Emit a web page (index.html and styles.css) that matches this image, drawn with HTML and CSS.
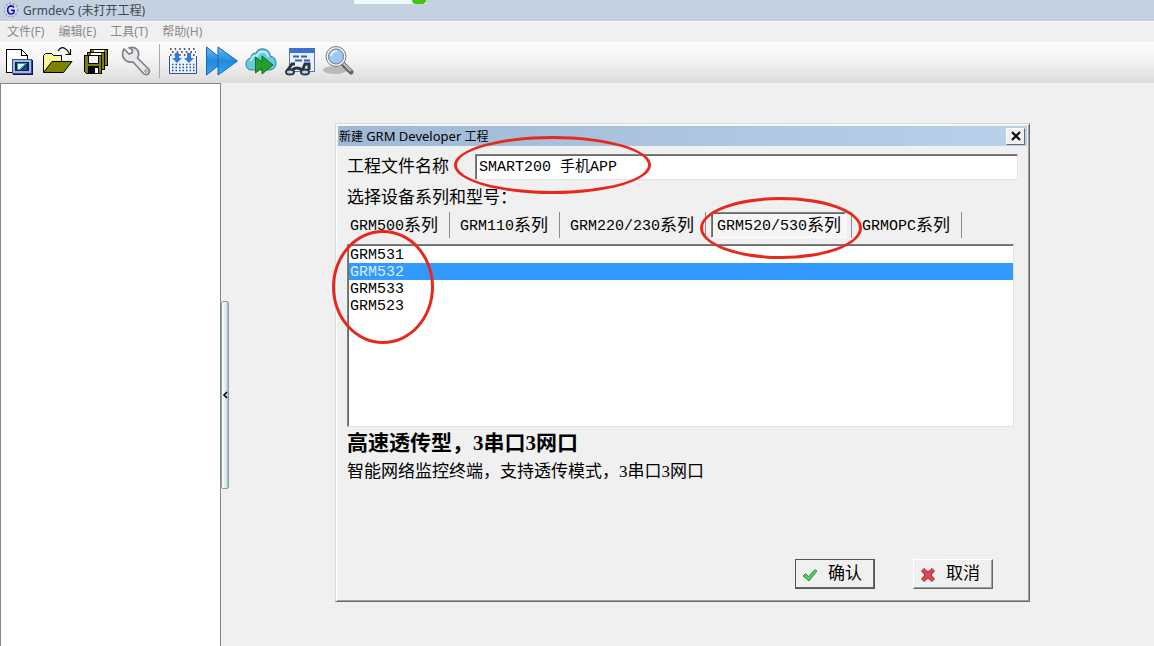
FILE: index.html
```
<!DOCTYPE html>
<html lang="zh-CN">
<head>
    <meta charset="UTF-8">
    <meta name="viewport" content="width=device-width, initial-scale=1.0">
    <title>Grmdev5</title>
    <link rel="stylesheet" href="styles.css">
</head>
<body>
    <header class="titlebar">
        <svg class="app-icon" width="16" height="16" viewBox="0 0 16 16">
            <circle cx="8" cy="8" r="6.500" fill="#dfe4ee" stroke="#9a9aa0" stroke-width="1.500" stroke-dasharray="2 1.5"/>
            <path d="M11 5.5Q10 3.8 8 3.8Q4.8 4.2 4.6 8Q4.8 11.8 8 12Q10.4 11.9 11 10.5V8.3H8" fill="none" stroke="#1010c8" stroke-width="1.7"/>
        </svg>
        <span>Grmdev5 (未打开工程)</span>
        <div class="top-tab"><i></i></div>
    </header>

    <nav class="menubar">
        <button>文件(F)</button>
        <button>编辑(E)</button>
        <button>工具(T)</button>
        <button>帮助(H)</button>
    </nav>

    <div class="toolbar">
        <button aria-label="新建">
            <svg width="32" height="32" viewBox="0 0 32 32" shape-rendering="crispEdges">
                <path d="M3.5 4.5H18.5L24.5 10.5V27.5H3.5Z" fill="#fff" stroke="#000"/>
                <path d="M18.5 4.5V10.5H24.5" fill="none" stroke="#000"/>
                <rect x="9.5" y="14.5" width="19" height="14" fill="#a9b7e0" stroke="#3a4a90"/>
                <path d="M10 29.5H29.5V15" fill="none" stroke="#101040"/>
                <rect x="12" y="17" width="14" height="9" fill="#10205c"/>
                <path d="M14 18H24V19L17 25H14Z" fill="#2ba4a4"/>
                <path d="M15 19H21L16 24H15Z" fill="#e8ffff"/>
                <path d="M24 20V25H18Z" fill="#1c3f9a"/>
            </svg>
        </button>
        <button aria-label="打开">
            <svg width="32" height="32" viewBox="0 0 32 32">
                <path d="M2.5 27V10.5L4.5 8.5H10.5L12.5 10.5H20.5V17" fill="#fbf59a" stroke="#000"/>
                <path d="M2.5 27.5L11 16.5H31L22.5 27.5Z" fill="#808000" stroke="#000"/>
                <path d="M17 6Q20 1 24 3.5Q27 5 28.5 9M29.5 4V9.5H24.5" fill="none" stroke="#000" stroke-width="1.2"/>
            </svg>
        </button>
        <button aria-label="全部保存">
            <svg width="34" height="32" viewBox="-1 0 34 32" shape-rendering="crispEdges">
                <path d="M10.5 4.5H27.5V20.5H10.5Z" fill="#808000" stroke="#000"/>
                <rect x="14" y="5" width="10" height="8" fill="#fff"/>
                <path d="M7.5 7.5H24.5V24.5H7.5Z" fill="#808000" stroke="#000"/>
                <rect x="11" y="8" width="10" height="8" fill="#fff"/>
                <path d="M4.5 10.5H21.5V28.5H6.5L4.5 26.5Z" fill="#808000" stroke="#000"/>
                <rect x="8.5" y="10.5" width="10" height="8" fill="#f4f4f4" stroke="#000"/>
                <rect x="8" y="21" width="11" height="7" fill="#000"/>
                <rect x="15" y="23" width="3" height="5" fill="#fff"/>
            </svg>
        </button>
        <button aria-label="设置">
            <svg width="34" height="32" viewBox="-1 0 34 32">
                <path d="M4 3L9 8L12 7L12.500 4L9 1.800Q15 0 18 5Q19.500 9 17.500 12L29 23.500Q30.500 27 27 28.500Q25 29 23.500 27.500L13 16Q7 17 4 12.500Q1 8 4 3Z" transform="translate(0 1)" fill="#e7e7ea" stroke="#808088" stroke-width="1.700" stroke-linejoin="round"/>
                <circle cx="26" cy="26" r="1.300" fill="#fff" stroke="#888890"/>
            </svg>
        </button>
        <span class="divider"></span>
        <button aria-label="编译">
            <svg width="32" height="32" viewBox="0 0 32 32">
                <path d="M3 4H29M5 7H29M3 10H29" stroke="#202a3c" stroke-width="1.600" stroke-dasharray="1.600 3"/>
                <path d="M2.500 11V28.500H29.500V11" fill="#eef4fd" stroke="#2e539b"/>
                <path d="M5 19.500H28M5 22.500H28M5 25.500H28" stroke="#294c94" stroke-width="1.500" stroke-dasharray="1.500 2"/>
                <path d="M8 8H12V13H15L10 18L5 13H8ZM20 8H24V13H27L22 18L17 13H20Z" fill="#3478df"/>
            </svg>
        </button>
        <button aria-label="下载">
            <svg width="33" height="32" viewBox="0 0 33 32">
                <defs>
                    <linearGradient id="blue" x2="0" y2="1">
                        <stop offset="0" stop-color="#69bdf5"/>
                        <stop offset=".5" stop-color="#2188de"/>
                        <stop offset="1" stop-color="#31aaf2"/>
                    </linearGradient>
                </defs>
                <path d="M1.500 2L13 11V2L32.500 16L13 30V21L1.500 30Z" fill="url(#blue)" stroke="#1769b4" stroke-linejoin="round"/>
                <path d="M13 11V21" stroke="#1769b4"/>
            </svg>
        </button>
        <button aria-label="远程下载">
            <svg width="33" height="32" viewBox="0 0 33 32">
                <path d="M8 25Q2 25 2 19Q2 14 7 13Q7 8 12 8Q14 3 20 4Q26 5 26 11Q32 12 32 18Q32 24 26 25Z" fill="#65cbe0" stroke="#277e9b"/>
                <path d="M7 16Q8 10 13 11Q15 6 20 7Q24 8 24 12" fill="none" stroke="#b7f1f7" stroke-width="2"/>
                <path d="M11.500 12L18 17V11L29 20L18 29V23L11.500 28Z" fill="#249f2b" stroke="#176b1c" stroke-linejoin="round"/>
            </svg>
        </button>
        <button aria-label="监视">
            <svg width="33" height="32" viewBox="1 0 33 32">
                <rect x="7.500" y="3.500" width="25" height="23" fill="#e8f1ff" stroke="#5379bc"/>
                <rect x="8" y="3" width="25" height="5" fill="#3c71d0"/>
                <path d="M11 11.500H17M19 11.500H25M13 15.500H20M22 15.500H28" stroke="#355fa9" stroke-width="2"/>
                <path d="M5 26L10 19H13M20 26L23 19H27V25" fill="none" stroke="#30343d" stroke-width="3"/>
                <path d="M10 25Q15 21 20 25" fill="none" stroke="#30343d" stroke-width="3"/>
                <ellipse cx="8" cy="27" rx="4" ry="2.500" fill="#b9d7f7" stroke="#333740" stroke-width="2"/>
                <ellipse cx="23" cy="27" rx="4" ry="2.500" fill="#b9d7f7" stroke="#333740" stroke-width="2"/>
            </svg>
        </button>
        <button aria-label="查找">
            <svg width="33" height="32" viewBox="0 0 33 32">
                <ellipse cx="13" cy="25" rx="12" ry="4" fill="#b9b9b9"/>
                <path d="M21 19L29 27" stroke="#606367" stroke-width="5" stroke-linecap="round"/>
                <path d="M21 18L29 26" stroke="#c2c3c5" stroke-width="2"/>
                <circle cx="14" cy="11.500" r="10" fill="#f2f2f2" stroke="#777b80"/>
                <circle cx="14" cy="11.500" r="7.500" fill="#a3c8ef" stroke="#607a9c"/>
                <path d="M9 11Q10 6 15 6" fill="none" stroke="#e3f2ff" stroke-width="2"/>
            </svg>
        </button>
    </div>

    <div class="workspace">
        <aside class="project-tree"></aside>
        <div class="splitter">
            <button aria-label="收起">
                <svg width="6" height="8" viewBox="0 0 6 8"><path d="M5 1L2 4L5 7" fill="none" stroke="#000" stroke-width="1.600"/></svg>
            </button>
        </div>

        <main class="content">
            <form class="dialog">
                <div class="dialog-title">
                    <span>新建 <span class="title-latin">GRM Developer</span> 工程</span>
                    <button type="button" class="close" aria-label="关闭">
                        <svg width="10" height="10" viewBox="0 0 10 10"><path d="M1 1L9 9M9 1L1 9" stroke="#000" stroke-width="2"/></svg>
                    </button>
                </div>

                <div class="dialog-body">
                    <div class="name-row">
                        <label for="name">工程文件名称</label>
                        <input type="text" id="name" value="SMART200 手机APP">
                    </div>
                    <label class="model-label" for="models">选择设备系列和型号：</label>

                    <div class="tabs">
                        <div class="tab"><button type="button"><span class="latin">GRM500</span>系列</button></div>
                        <div class="tab"><button type="button"><span class="latin">GRM110</span>系列</button></div>
                        <div class="tab"><button type="button"><span class="latin">GRM220/230</span>系列</button></div>
                        <div class="tab active"><button type="button"><span class="latin">GRM520/530</span>系列</button></div>
                        <div class="tab"><button type="button"><span class="latin">GRMOPC</span>系列</button></div>
                    </div>

                    <select id="models" class="models" size="10">
                        <option>GRM531</option>
                        <option selected>GRM532</option>
                        <option>GRM533</option>
                        <option>GRM523</option>
                    </select>

                    <h2>高速透传型，3串口3网口</h2>
                    <p>智能网络监控终端，支持透传模式，3串口3网口</p>

                    <div class="actions">
                        <button type="button" class="default">
                            <svg width="16" height="14" viewBox="0 0 16 14"><path d="M1 8L3.500 5.500L6.500 8.500L13 1.500L15 3L7 13Z" fill="#55c45c" stroke="#379e43" stroke-linejoin="round"/></svg>
                            确认
                        </button>
                        <button type="button">
                            <svg width="16" height="14" viewBox="0 0 16 14"><path d="M1.500 3L4 .5L8 4L12 .5L14.500 3L11 7L14.500 11L12 13.500L8 10L4 13.500L1.500 11L5 7Z" fill="#d94b50" stroke="#a22f35" stroke-linejoin="round"/></svg>
                            取消
                        </button>
                    </div>
                </div>

                <div class="mark mark-name"></div>
                <div class="mark mark-tab"></div>
                <div class="mark mark-models"></div>
            </form>
        </main>
    </div>
</body>
</html>
```

FILE: styles.css
```
* {
    box-sizing: border-box;
}

body {
    font-family: 'Noto Sans', 'Noto Sans CJK SC', sans-serif;
    font-size: 12px;
    margin: 0;
    min-height: 100vh;
    display: flex;
    flex-direction: column;
    background: #f0f0f0;
    color: #000;
}

button {
    font: inherit;
    color: inherit;
    background: none;
    border: none;
    padding: 0;
}

svg {
    display: block;
}

.titlebar {
    position: relative;
    display: flex;
    align-items: center;
    gap: 4px;
    height: 21px;
    padding: 0 0 1px 3px;
    background: #c3d1e0;
    color: #3c4652;
}

.top-tab {
    position: absolute;
    left: 354px;
    top: 0;
    width: 72px;
    height: 4px;
    display: flex;
    justify-content: flex-end;
    background: #f0faff;
}
.top-tab i {
    width: 14px;
    height: 4px;
    background: #45c414;
    border-radius: 0 0 6px 6px;
}

.menubar {
    display: flex;
    gap: 14px;
    height: 21px;
    padding: 0 0 3px 7px;
    border-top: 1px solid #fafafa;
    background: #f0f0f0;
    color: #8a8a8a;
}

.toolbar {
    display: flex;
    align-items: center;
    gap: 6px;
    height: 41px;
    padding: 0 0 3px 3px;
    background: linear-gradient(#fdfdfd, #f5f5f5 40%, #dcdcdc);
}
.divider {
    width: 1px;
    height: 34px;
    margin: 0 1px 0 0;
    background: #a9a9a9;
}

.workspace {
    flex: 1;
    display: flex;
}

.project-tree {
    width: 221px;
    background: #fff;
    border: 1px solid #828790;
    border-bottom: none;
}

.splitter {
    display: flex;
    align-items: center;
    width: 8px;
    padding-top: 60px;
}
.splitter button {
    width: 8px;
    height: 188px;
    border: 1px solid #8f9ba0;
    border-radius: 2px;
    background: linear-gradient(to right, #fff, #d3e6ec 70%, #a4b7be);
}

.content {
    flex: 1;
    display: flex;
    padding: 40px 124px 44px 106px;
}

.dialog {
    position: relative;
    flex: 1;
    display: flex;
    flex-direction: column;
    margin: 0;
    padding: 2px;
    border: 1px solid #d8d8d8;
    border-right-color: #696969;
    border-bottom-color: #696969;
    box-shadow: inset 1px 1px #fff, inset -1px -1px #a0a0a0;
}

.dialog-title {
    display: flex;
    align-items: center;
    justify-content: space-between;
    height: 20px;
    padding: 0 2px 0 1px;
    line-height: 16px;
    background: linear-gradient(to right, #9fb8d6, #b9d1ea);
}
.title-latin {
    font-size: 13px;
}

.close {
    display: flex;
    align-items: center;
    justify-content: center;
    width: 19px;
    height: 17px;
    background: #f0f0f0;
    border: 1px solid #fff;
    border-right-color: #696969;
    border-bottom-color: #696969;
}

.dialog-body {
    flex: 1;
    display: flex;
    flex-direction: column;
    padding: 8px 9px 10px 9px;
    font-family: 'Liberation Mono', 'Noto Sans CJK SC', monospace;
    font-size: 17px;
    line-height: 28px;
}

.name-row {
    display: flex;
    gap: 26px;
    height: 26px;
}
.name-row input {
    flex: 1;
    height: 26px;
    padding: 0 3px 4px;
    border: 1px solid #e3e3e3;
    border-top-color: #808080;
    border-left-color: #808080;
    box-shadow: inset 1px 1px #696969;
    background: #fff;
    font-family: inherit;
    font-size: 15px;
}

.model-label {
    margin-top: 5px;
    height: 26px;
}

.tabs {
    display: flex;
    height: 26px;
    margin-top: 1px;
}
.tab {
    padding: 0 11px 0 10px;
    border-right: 1px solid #8c8c8c;
}
.tab:first-child {
    padding-left: 3px;
}
.tab button {
    display: flex;
    align-items: center;
    height: 26px;
    padding-top: 3px;
}
.tab.active {
    padding: 0 5px;
}
.tab.active button {
    padding: 4px 4px 0 5px;
    border: 1px solid #fff;
    border-top-color: #808080;
    border-left-color: #808080;
    box-shadow: inset 1px 1px #696969;
    background: #f5f5f5;
}
.latin {
    font-size: 15px;
}

.models {
    height: 183px;
    margin: 6px 4px 0 0;
    padding: 1px 0 1px 1px;
    border: 1px solid #e3e3e3;
    border-top-color: #808080;
    border-left-color: #808080;
    box-shadow: inset 1px 1px #696969;
    border-radius: 0;
    outline: none;
    overflow: hidden;
    background: #fff;
    font-family: inherit;
    font-size: 15px;
}
.models option {
    height: 17px;
    min-height: 17px;
    padding: 1px 1px 0;
    line-height: 17px;
    color: #000;
}
.models option:checked {
    background: #3399ff linear-gradient(#3399ff, #3399ff);
    color: #fff;
    -webkit-text-fill-color: #d9efff;
}

h2 {
    margin: 2px 0 0;
    font-family: 'Liberation Serif', 'Noto Sans CJK SC', serif;
    font-size: 21px;
    line-height: 28px;
}

p {
    margin: 1px 0 0;
    font-family: 'Liberation Serif', 'Noto Sans CJK SC', serif;
}

.actions {
    display: flex;
    justify-content: flex-end;
    gap: 38px;
    margin-top: auto;
    padding-right: 25px;
}
.actions button {
    display: flex;
    align-items: center;
    gap: 10px;
    width: 80px;
    height: 30px;
    padding: 2px 0 0 6px;
    border: 1px solid #fff;
    border-right-color: #696969;
    border-bottom-color: #696969;
    box-shadow: inset -1px -1px #a0a0a0;
}
.actions .default {
    border-color: #555;
    box-shadow: inset -1px -1px #696969;
}

/* red circles over the fields to fill in */
.mark {
    position: absolute;
    border: 3px solid #e6291c;
    border-radius: 50%;
    pointer-events: none;
}
.mark-name {
    left: 118px;
    top: 12px;
    width: 197px;
    height: 58px;
}
.mark-tab {
    left: 364px;
    top: 73px;
    width: 162px;
    height: 62px;
}
.mark-models {
    left: -4px;
    top: 106px;
    width: 102px;
    height: 114px;
}
```
